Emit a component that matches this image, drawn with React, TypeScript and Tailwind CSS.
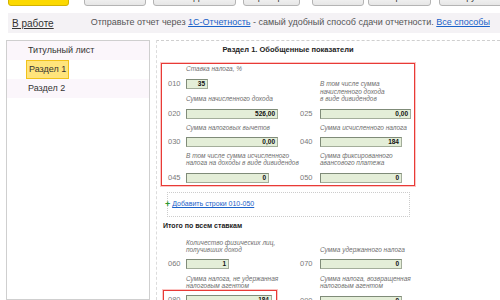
import React from 'react';

function Label({ children, className = '' }: { children: React.ReactNode; className?: string }) {
  return (
    <div className={`italic whitespace-nowrap text-[6.5px] leading-[7.5px] text-[#6f6f6f] ${className}`}>{children}</div>
  );
}

function Code({ children, className }: { children: React.ReactNode; className: string }) {
  return <div className={`text-[7.5px] leading-[10px] text-[#7a7a7a] shrink-0 ${className}`}>{children}</div>;
}

function Input({ value, className }: { value: string; className: string }) {
  return (
    <div
      className={`h-[10px] bg-[#e4eed8] border border-[#a3ad9a] border-t-[#7f8b78] border-l-[#7f8b78] flex items-center justify-end pr-[2px] text-[6.5px] font-bold text-[#111] ${className}`}
    >
      {value}
    </div>
  );
}

const buttons = [
  { label: 'Заполнить', cls: 'ml-[15px] w-[62px]' },
  { label: 'Расшифровать', cls: 'ml-[7px] w-[83px]' },
  { label: 'Проверка', cls: 'ml-[7px] w-[57px]' },
  { label: 'Печать', cls: 'ml-[12px] w-[52px]' },
  { label: 'Отправка', cls: 'ml-[4px] w-[63px]' },
  { label: 'Выгрузить', cls: 'ml-[8px] w-[66px]' },
];

export default function App() {
  return (
    <div className="w-[500px] h-[300px] overflow-hidden bg-white font-['Liberation_Sans',Arial,sans-serif]">
      {/* toolbar, mostly scrolled off the top */}
      <div className="flex h-[6px] pl-[8px]">
        <div className="-mt-[10px] h-[16px] w-[61px] shrink-0 rounded-[3px] border border-[#d2b200] bg-[#fcd900] flex items-center justify-center text-[9px] text-[#333]">
          Записать
        </div>
        {buttons.map((b) => (
          <div
            key={b.label}
            className={`-mt-[10px] h-[16px] shrink-0 rounded-[3px] border border-[#b4b4b4] bg-gradient-to-b from-white to-[#e6e6e6] flex items-center justify-center text-[9px] text-[#333] ${b.cls}`}
          >
            {b.label}
          </div>
        ))}
      </div>

      {/* status bar */}
      <div className="mt-[7px] ml-[8px] h-[20px] bg-[#f4f2f5] flex items-center pl-[4px] whitespace-nowrap">
        <span className="text-[10px] text-[#333] underline">В работе</span>
        <span className="ml-[37px] text-[9px] text-[#555]">
          Отправьте отчет через{' '}
          <span className="text-[#1a62c9] underline">1С-Отчетность</span> - самый удобный способ сдачи
          отчетности. <span className="text-[#1a62c9] underline">Все способы</span>
        </span>
      </div>

      <div className="flex mt-[7px] h-[260px]">
        {/* sections list */}
        <div className="ml-[6px] w-[144px] shrink-0 border border-[#cfcfcf] text-[9px] text-[#333]">
          <div className="h-[19px] bg-[#fbf6fb] flex items-center pl-[21px]">Титульный лист</div>
          <div className="h-[19px] flex items-center pl-[19px]">
            <div className="h-[19px] flex items-center px-[2px] bg-[#ffe47c] border border-[#f1c21b]">Раздел 1</div>
          </div>
          <div className="h-[19px] bg-[#fbf6fb] flex items-center pl-[21px]">Раздел 2</div>
        </div>

        {/* form */}
        <div className="ml-[6px] flex-1 border-l border-dashed border-l-[#dcdcdc] border-t border-t-[#cfcfcf]">
          <div className="ml-[4px] w-[254px]">
            <div className="pt-[4px] h-[14px] text-center text-[7.5px] leading-[10px] font-bold text-[#222]">
              Раздел 1. Обобщенные показатели
            </div>

            <div className="mt-[8px] border border-[#e83a36] shadow-[0_0_0_1px_#fbc6c4] pl-[6px] pt-[1px] pb-[2px]">
              <div className="grid grid-cols-[132px_1fr] items-end">
                <div>
                  <Label className="ml-[18px]">Ставка налога, %</Label>
                  <div className="flex items-center mt-[6px]">
                    <Code className="w-[18px]">010</Code>
                    <Input value="35" className="w-[22px]" />
                  </div>
                  <Label className="ml-[18px] mt-[6.5px]">Сумма начисленного дохода</Label>
                  <div className="flex items-center mt-[6px]">
                    <Code className="w-[18px]">020</Code>
                    <Input value="526,00" className="w-[92px]" />
                  </div>
                </div>
                <div>
                  <Label className="ml-[20px]">
                    В том числе сумма
                    <br />
                    начисленного дохода
                    <br />в виде дивидендов
                  </Label>
                  <div className="flex items-center mt-[6px]">
                    <Code className="w-[20px]">025</Code>
                    <Input value="0,00" className="w-[91px]" />
                  </div>
                </div>
              </div>

              <div className="grid grid-cols-[132px_1fr] items-end mt-[5px]">
                <div>
                  <Label className="ml-[18px]">Сумма налоговых вычетов</Label>
                  <div className="flex items-center mt-[6px]">
                    <Code className="w-[18px]">030</Code>
                    <Input value="0,00" className="w-[92px]" />
                  </div>
                </div>
                <div>
                  <Label className="ml-[20px]">Сумма исчисленного налога</Label>
                  <div className="flex items-center mt-[6px]">
                    <Code className="w-[20px]">040</Code>
                    <Input value="184" className="w-[82px]" />
                  </div>
                </div>
              </div>

              <div className="grid grid-cols-[132px_1fr] items-end mt-[4.5px]">
                <div>
                  <Label className="ml-[18px]">
                    В том числе сумма исчисленного
                    <br />
                    налога на доходы в виде дивидендов
                  </Label>
                  <div className="flex items-center mt-[6px]">
                    <Code className="w-[18px]">045</Code>
                    <Input value="0" className="w-[83px]" />
                  </div>
                </div>
                <div>
                  <Label className="ml-[20px]">
                    Сумма фиксированного
                    <br />
                    авансового платежа
                  </Label>
                  <div className="flex items-center mt-[6px]">
                    <Code className="w-[20px]">050</Code>
                    <Input value="0" className="w-[82px]" />
                  </div>
                </div>
              </div>
            </div>

            <div className="mt-[6.5px] ml-[6px] w-[243px] h-[25px] border border-dotted border-[#cccccc] flex items-center">
              <span className="-ml-[3px] text-[9px] leading-[9px] font-bold text-[#2f9a2f]">+</span>
              <span className="ml-[2px] text-[7px] text-[#1a62c9] underline">Добавить строки 010-050</span>
            </div>

            <div className="mt-[5px] ml-[2px] text-[7px] leading-[8px] font-bold text-[#222]">Итого по всем ставкам</div>

            <div className="pl-[7px]">
              <div className="grid grid-cols-[132px_1fr] items-end mt-[8.5px]">
                <div>
                  <Label className="ml-[18px]">
                    Количество физических лиц,
                    <br />
                    получивших доход
                  </Label>
                  <div className="flex items-center mt-[5px]">
                    <Code className="w-[18px]">060</Code>
                    <Input value="1" className="w-[43px]" />
                  </div>
                </div>
                <div>
                  <Label className="ml-[20px]">Сумма удержанного налога</Label>
                  <div className="flex items-center mt-[5px]">
                    <Code className="w-[20px]">070</Code>
                    <Input value="0" className="w-[82px]" />
                  </div>
                </div>
              </div>

              <div className="grid grid-cols-[132px_1fr] items-start mt-[6px]">
                <div>
                  <Label className="ml-[18px]">
                    Сумма налога, не удержанная
                    <br />
                    налоговым агентом
                  </Label>
                  <div className="-ml-[5px] w-[114px] border border-[#e83a36] shadow-[0_0_0_1px_#fbc6c4] pl-[4px] pt-[4px] pb-[4px]">
                    <div className="flex items-center">
                      <Code className="w-[18px]">080</Code>
                      <Input value="184" className="w-[86px]" />
                    </div>
                  </div>
                </div>
                <div>
                  <Label className="ml-[20px]">
                    Сумма налога, возвращенная
                    <br />
                    налоговым агентом
                  </Label>
                  <div className="flex items-center mt-[6.5px]">
                    <Code className="w-[20px]">090</Code>
                    <Input value="0" className="w-[82px]" />
                  </div>
                </div>
              </div>
            </div>
          </div>
        </div>
      </div>
    </div>
  );
}
